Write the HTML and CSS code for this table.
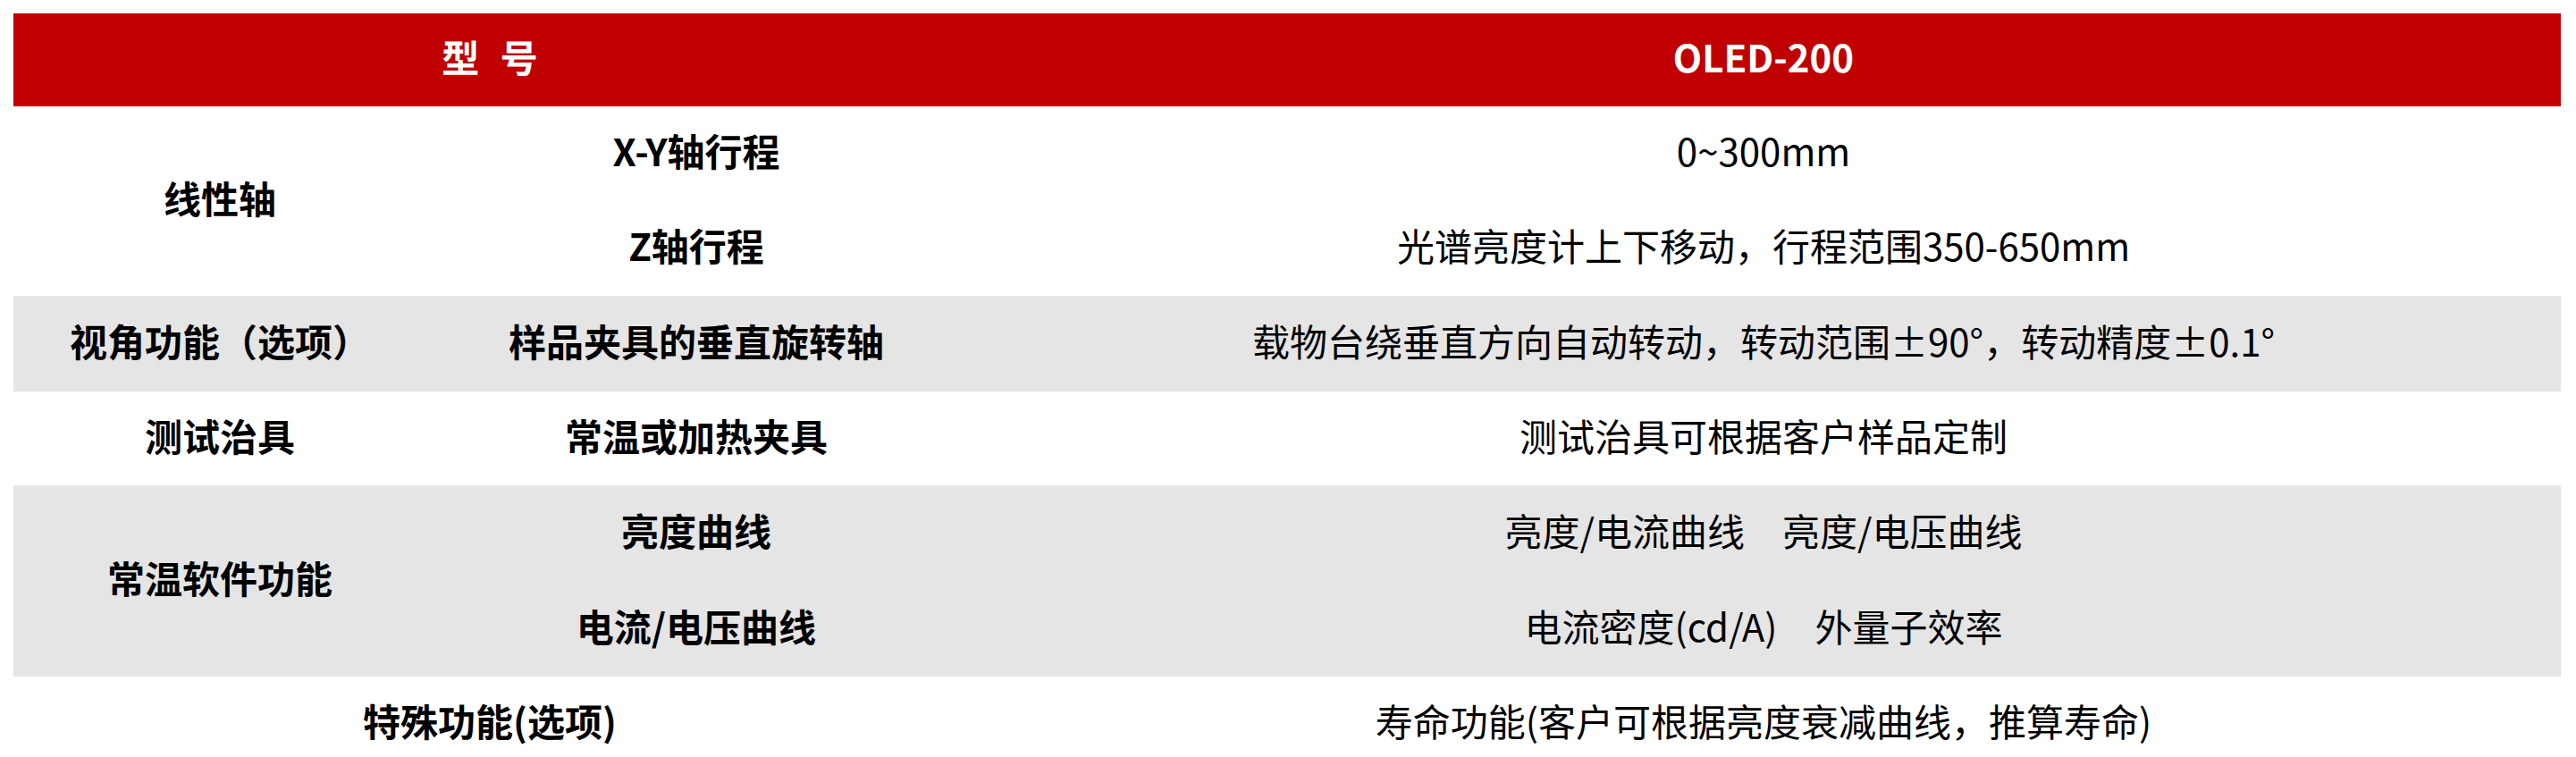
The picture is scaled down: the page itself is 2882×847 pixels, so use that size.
FILE: index.html
```html
<!DOCTYPE html>
<html lang="zh-CN">
<head>
<meta charset="utf-8">
<title>OLED-200</title>
<link rel="stylesheet" href="styles.css">
</head>
<body>
<div class="spec">
  <div class="cell head span2 model">型 号</div>
  <div class="cell head">OLED-200</div>

  <div class="cell b rs2">线性轴</div>
  <div class="cell b">X-Y轴行程</div>
  <div class="cell">0~300mm</div>
  <div class="cell b">Z轴行程</div>
  <div class="cell">光谱亮度计上下移动，行程范围350-650mm</div>

  <div class="cell b gray">视角功能（选项）</div>
  <div class="cell b gray">样品夹具的垂直旋转轴</div>
  <div class="cell gray">载物台绕垂直方向自动转动，转动范围±90°，转动精度±0.1°</div>

  <div class="cell b">测试治具</div>
  <div class="cell b">常温或加热夹具</div>
  <div class="cell">测试治具可根据客户样品定制</div>

  <div class="cell b gray rs2">常温软件功能</div>
  <div class="cell b gray">亮度曲线</div>
  <div class="cell gray">亮度/电流曲线　亮度/电压曲线</div>
  <div class="cell b gray">电流/电压曲线</div>
  <div class="cell gray">电流密度(cd/A)　外量子效率</div>

  <div class="cell b span2">特殊功能(选项)</div>
  <div class="cell">寿命功能(客户可根据亮度衰减曲线，推算寿命)</div>
</div>
</body>
</html>
```

FILE: styles.css
```css
html, body {
  margin: 0;
  padding: 0;
  background: #ffffff;
}

body {
  padding: 15px 0 0 15px;
  font-family: "Noto Sans CJK SC", "Noto Sans", sans-serif;
  color: #000000;
  overflow: hidden;
}

.spec {
  display: grid;
  grid-template-columns: 462px 604px 1784px;
  grid-template-rows: 104px 106px 106px 107px 105px 107px 107px 106px;
  width: 2850px;
}

.cell {
  display: flex;
  align-items: center;
  justify-content: center;
  padding-bottom: 8px;
  font-size: 42px;
  font-weight: 400;
  line-height: 1;
  white-space: nowrap;
}

.b {
  font-weight: 700;
}

.head {
  background: #c00000;
  color: #ffffff;
  font-weight: 700;
}

.model {
  word-spacing: 14px;
}

.gray {
  background: #e5e5e5;
}

.span2 {
  grid-column: span 2;
}

.rs2 {
  grid-row: span 2;
}
```
